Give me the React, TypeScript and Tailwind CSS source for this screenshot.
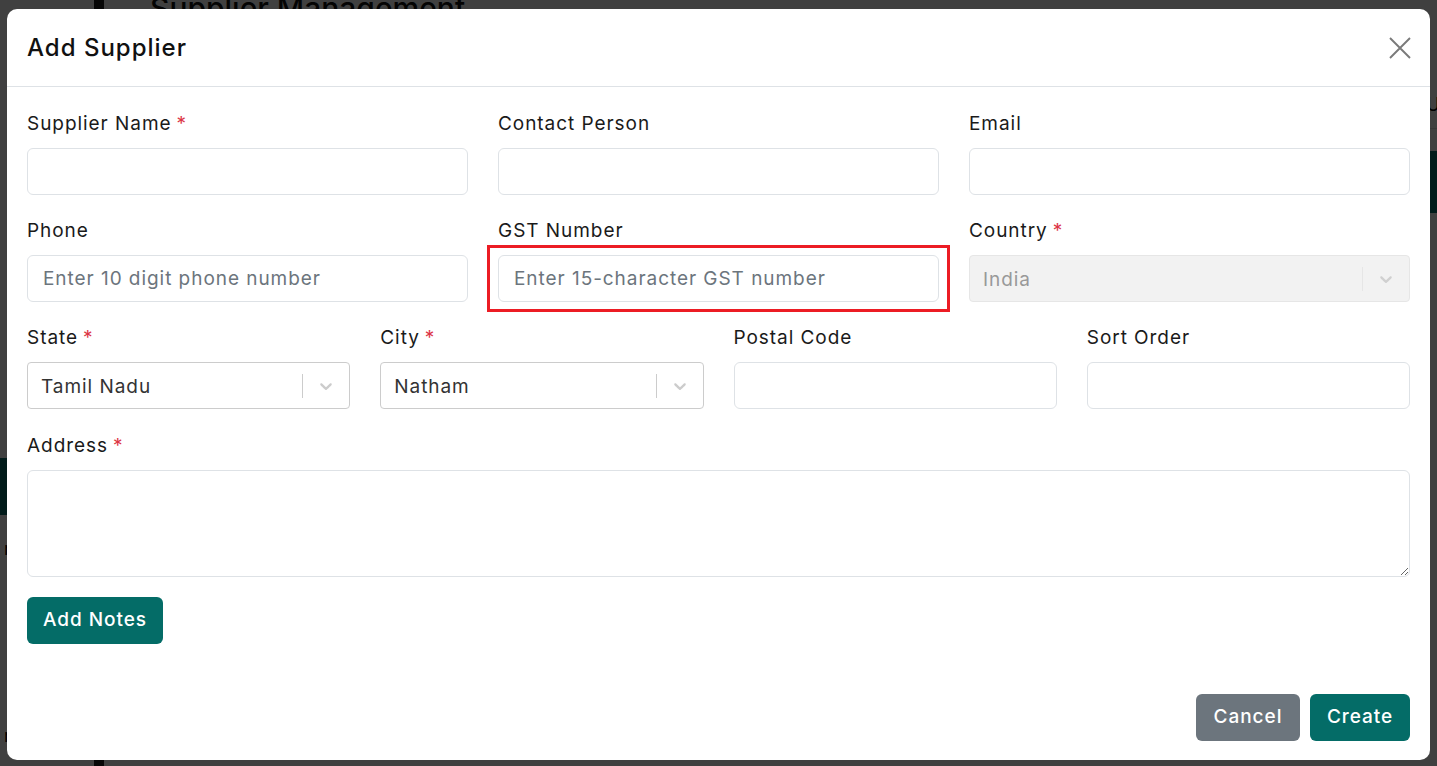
import { ReactNode } from "react";

const font = { fontFamily: "Inter, 'Noto Sans', sans-serif" };

const Label = ({ text, required }: { text: string; required?: boolean }) => (
  <label className="block text-[19px] leading-[27px] text-[#1a1a1a] mb-[11px]">
    {text}
    {required && <span className="text-[#dc3545] ml-[5px]">*</span>}
  </label>
);

const TextInput = ({ placeholder }: { placeholder?: string }) => (
  <input
    type="text"
    placeholder={placeholder}
    className="w-full h-[47px] rounded-md border border-[#dee2e6] bg-white px-[15px] text-[19px] tracking-[0.95px] text-[#212529] placeholder:text-[#6c757d] outline-none"
  />
);

const Chevron = ({ color }: { color: string }) => (
  <svg width="20" height="20" viewBox="0 0 20 20" fill={color}>
    <path d="M4.516 7.548c0.436-0.446 1.043-0.481 1.576 0l3.908 3.747 3.908-3.747c0.533-0.481 1.141-0.446 1.574 0 0.436 0.445 0.408 1.197 0 1.615-0.406 0.418-4.695 4.502-4.695 4.502-0.217 0.223-0.502 0.335-0.787 0.335s-0.57-0.112-0.789-0.335c0 0-4.287-4.084-4.695-4.502s-0.436-1.17 0-1.615z" />
  </svg>
);

const SelectBox = ({ value, disabled }: { value: string; disabled?: boolean }) => (
  <div
    className={
      disabled
        ? "flex items-center h-[47px] rounded-[4px] border border-[#e6e6e6] bg-[#f2f2f2]"
        : "flex items-center h-[47px] rounded-[4px] border border-[#cccccc] bg-white"
    }
  >
    <div
      className={
        disabled
          ? "flex-1 pl-[13px] pt-[3px] text-[19px] text-[#999999]"
          : "flex-1 pl-[13px] pt-[3px] text-[19px] text-[#333333]"
      }
    >
      {value}
    </div>
    <span
      className={
        disabled ? "w-px h-[24px] bg-[#e6e6e6]" : "w-px h-[24px] bg-[#cccccc]"
      }
    />
    <div className="w-[46px] flex justify-center">
      <Chevron color={disabled ? "#d0d0d0" : "#cccccc"} />
    </div>
  </div>
);

const Field = ({
  label,
  required,
  children,
}: {
  label: string;
  required?: boolean;
  children: ReactNode;
}) => (
  <div>
    <Label text={label} required={required} />
    {children}
  </div>
);

// page underneath the modal backdrop
const BackgroundPage = () => (
  <div className="flex h-[766px] bg-white" style={font}>
    <aside className="w-[104px] border-r-[10px] border-[#1f1f1f] flex flex-col pt-[458px]">
      <div className="h-[57px] bg-[#046c67]" />
      <div className="mt-[20px] pl-1 text-[18px] text-black">r</div>
      <div className="mt-[160px] pl-1 text-[18px] text-black">r</div>
    </aside>
    <main className="flex-1 pl-[36px]">
      <h1 className="-mt-[14px] pl-[10px] text-[30px] font-medium text-[#111]">
        Supplier Management
      </h1>
      <div className="mt-[60px] flex justify-end border-b border-[#ddd] pb-[10px] text-[18px] text-black">
        <span className="-mr-[14px]">Up</span>
      </div>
      <div className="mt-[22px] h-[62px] bg-[#046c67]" />
    </main>
  </div>
);

export default function App() {
  return (
    <div className="relative h-[766px] overflow-hidden" style={font}>
      <BackgroundPage />
      <div className="absolute inset-0 bg-black/75 pl-[7px] pr-[7px] pt-[9px] pb-[6px] tracking-[0.95px]">
        <div className="h-full bg-white rounded-[10px] flex flex-col">
          <div className="flex items-center justify-between h-[78px] border-b border-[#dee2e6] pl-[20px] pr-[19px]">
            <h2 className="text-[24px] tracking-[1px] font-medium text-[#111]">Add Supplier</h2>
            <button className="text-[#7a7a7a]">
              <svg width="22" height="22" viewBox="0 0 22 22" fill="none" stroke="currentColor" strokeWidth="1.9">
                <path d="M1 1 L21 21 M21 1 L1 21" />
              </svg>
            </button>
          </div>

          <div className="flex-1 px-[20px] pt-[23px]">
            <div className="grid grid-cols-3 gap-x-[30px] gap-y-[22px]">
              <Field label="Supplier Name" required>
                <TextInput />
              </Field>
              <Field label="Contact Person">
                <TextInput />
              </Field>
              <Field label="Email">
                <TextInput />
              </Field>
              <Field label="Phone">
                <TextInput placeholder="Enter 10 digit phone number" />
              </Field>
              <Field label="GST Number">
                <div className="relative">
                  <TextInput placeholder="Enter 15-character GST number" />
                  <span className="pointer-events-none absolute -inset-x-[11px] -inset-y-[10px] border-[3px] border-[#ec1c24]" />
                </div>
              </Field>
              <Field label="Country" required>
                <SelectBox value="India" disabled />
              </Field>
            </div>

            <div className="grid grid-cols-4 gap-x-[30px] mt-[22px]">
              <Field label="State" required>
                <SelectBox value="Tamil Nadu" />
              </Field>
              <Field label="City" required>
                <SelectBox value="Natham" />
              </Field>
              <Field label="Postal Code">
                <TextInput />
              </Field>
              <Field label="Sort Order">
                <TextInput />
              </Field>
            </div>

            <div className="mt-[23px]">
              <Label text="Address" required />
              <textarea className="block w-full h-[107px] rounded-md border border-[#dee2e6] outline-none" />
            </div>

            <button className="mt-[20px] h-[47px] px-[16px] rounded-md bg-[#046c67] text-white text-[19px] font-medium">
              Add Notes
            </button>
          </div>

          <div className="flex justify-end gap-[10px] px-[20px] pb-[19px]">
            <button className="h-[47px] w-[104px] rounded-md bg-[#6c757d] text-white text-[19px] font-medium">
              Cancel
            </button>
            <button className="h-[47px] w-[100px] rounded-md bg-[#046c67] text-white text-[19px] font-medium">
              Create
            </button>
          </div>
        </div>
      </div>
    </div>
  );
}
